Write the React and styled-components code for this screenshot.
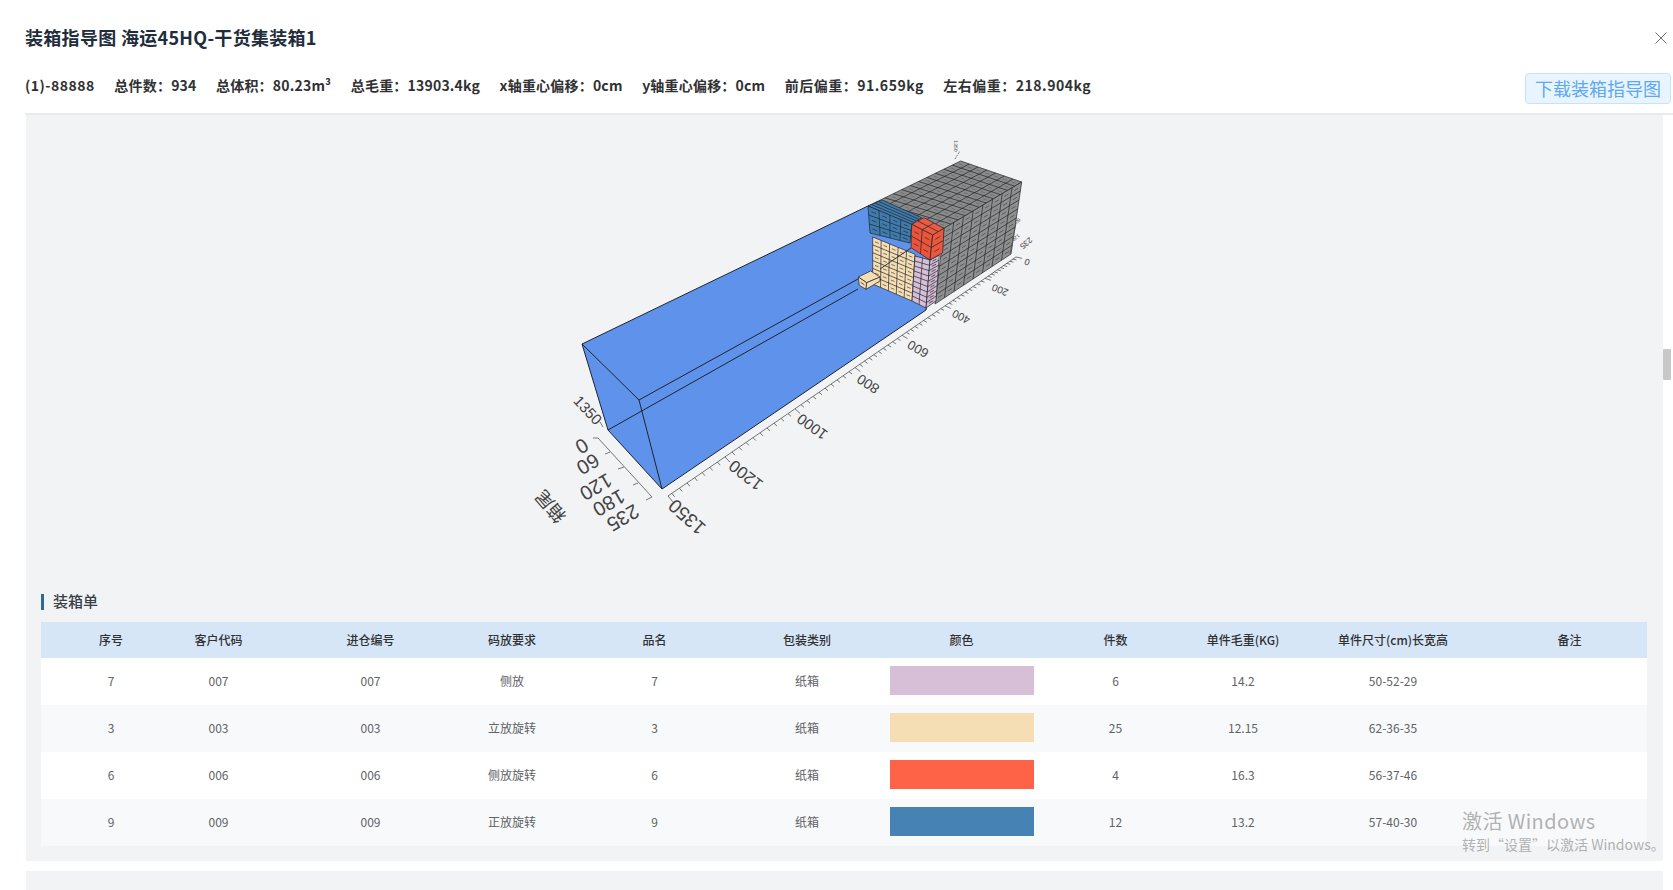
import styled, { createGlobalStyle } from "styled-components"

const INFO = [
    "(1)-88888",
    "总件数：934",
    "总体积：80.23m³",
    "总毛重：13903.4kg",
    "x轴重心偏移：0cm",
    "y轴重心偏移：0cm",
    "前后偏重：91.659kg",
    "左右偏重：218.904kg",
]

// width + how far the text sits off the middle of its column
const COLUMNS = [
    { title: "序号", key: "no", width: 124, shift: 8 },
    { title: "客户代码", key: "code", width: 129, shift: -11 },
    { title: "进仓编号", key: "code", width: 147, shift: 3 },
    { title: "码放要求", key: "rule", width: 142, shift: 0 },
    { title: "品名", key: "no", width: 147, shift: -2 },
    { title: "包装类别", key: "pack", width: 154, shift: 0 },
    { title: "颜色", key: "color", width: 155, shift: 0 },
    { title: "件数", key: "count", width: 141, shift: 6 },
    { title: "单件毛重(KG)", key: "weight", width: 138, shift: -6 },
    { title: "单件尺寸(cm)长宽高", key: "size", width: 164, shift: -7 },
    { title: "备注", key: "note", width: 165, shift: 5 },
]

const ROWS = [
    { no: "7", code: "007", rule: "侧放", pack: "纸箱", color: "#d8bfd8", count: "6", weight: "14.2", size: "50-52-29", note: "" },
    { no: "3", code: "003", rule: "立放旋转", pack: "纸箱", color: "#f5deb3", count: "25", weight: "12.15", size: "62-36-35", note: "" },
    { no: "6", code: "006", rule: "侧放旋转", pack: "纸箱", color: "#ff6347", count: "4", weight: "16.3", size: "56-37-46", note: "" },
    { no: "9", code: "009", rule: "正放旋转", pack: "纸箱", color: "#4682b4", count: "12", weight: "13.2", size: "57-40-30", note: "" },
]

const TEMPLATE = COLUMNS.map((c) => c.width + "px").join(" ")

const mix = (a, b, t) => [a[0] + (b[0] - a[0]) * t, a[1] + (b[1] - a[1]) * t]
const toPoints = (pts) => pts.map((p) => p.join(",")).join(" ")

// one side of a stack of boxes: a quad a-b-c-d cut into a grid
function Face({ pts, cols, rows, fill, mark }) {
    const [a, b, c, d] = pts
    const lines = []
    for (let i = 0; i <= cols; i++) {
        lines.push([mix(a, b, i / cols), mix(d, c, i / cols)])
    }
    for (let j = 0; j <= rows; j++) {
        lines.push([mix(a, d, j / rows), mix(b, c, j / rows)])
    }
    const marks = []
    if (mark) {
        for (let i = 0; i < cols; i++) {
            for (let j = 0; j < rows; j++) {
                const top = mix(mix(a, b, (i + 0.5) / cols), mix(d, c, (i + 0.5) / cols), (j + 0.5) / rows)
                const dir = mix([0, 0], [b[0] - a[0], b[1] - a[1]], 0.22 / cols)
                marks.push([[top[0] - dir[0], top[1] - dir[1]], [top[0] + dir[0], top[1] + dir[1]]])
            }
        }
    }
    return (
        <g>
            <polygon points={toPoints(pts)} fill={fill} />
            {marks.map((m, i) => (
                <line key={"m" + i} x1={m[0][0]} y1={m[0][1]} x2={m[1][0]} y2={m[1][1]} stroke={mark} strokeWidth="0.9" />
            ))}
            {lines.map((l, i) => (
                <line key={i} x1={l[0][0]} y1={l[0][1]} x2={l[1][0]} y2={l[1][1]} stroke="#20242c" strokeWidth="0.7" />
            ))}
        </g>
    )
}

const AXIS_STOPS = [
    [0, 1016], [200, 985], [400, 945], [600, 902], [800, 855], [1000, 795], [1200, 725], [1350, 668],
]

function axisPoint(v) {
    let i = 0
    while (i < AXIS_STOPS.length - 2 && v > AXIS_STOPS[i + 1][0]) i++
    const [v0, x0] = AXIS_STOPS[i]
    const [v1, x1] = AXIS_STOPS[i + 1]
    const x = x0 + ((v - v0) / (v1 - v0)) * (x1 - x0)
    const y = 495 + ((x - 668) / (1016 - 668)) * (256 - 495)
    return [x, y]
}

function XAxis() {
    const ticks = []
    for (let v = 0; v <= 1350; v += v >= 1340 ? 10 : 20) ticks.push(v)
    const [sx, sy] = axisPoint(0)
    const [ex, ey] = axisPoint(1350)
    return (
        <g stroke="#555" strokeWidth="0.8">
            <line x1={sx} y1={sy} x2={ex} y2={ey} />
            {ticks.map((v) => {
                const [x, y] = axisPoint(v)
                const big = v % 200 === 0 || v === 1350 ? 1.7 : 1
                const t = v / 1350
                const dx = (3.6 - t * 0.8) * big
                const dy = (0.8 + t * 2.6) * big
                return <line key={v} x1={x} y1={y} x2={x + dx} y2={y + dy} />
            })}
        </g>
    )
}

const AXIS_LABELS = [
    { text: "1350", x: 687, y: 516, size: 19, rot: 222 },
    { text: "1200", x: 746, y: 474, size: 17, rot: 218 },
    { text: "1000", x: 812, y: 426, size: 15, rot: 216 },
    { text: "800", x: 868, y: 383, size: 14, rot: 213 },
    { text: "600", x: 918, y: 348, size: 13, rot: 210 },
    { text: "400", x: 961, y: 316, size: 11, rot: 206 },
    { text: "200", x: 1000, y: 289, size: 10, rot: 202 },
    { text: "0", x: 1027, y: 261, size: 9, rot: 200 },
    { text: "0", x: 582, y: 445, size: 20, rot: 150 },
    { text: "60", x: 588, y: 463, size: 20, rot: 150 },
    { text: "120", x: 596, y: 486, size: 20, rot: 150 },
    { text: "180", x: 609, y: 502, size: 20, rot: 150 },
    { text: "235", x: 623, y: 517, size: 20, rot: 150 },
    { text: "1350", x: 588, y: 409, size: 15, rot: 47 },
    { text: "235", x: 1026, y: 242, size: 8, rot: 140 },
    { text: "120", x: 1016, y: 237, size: 5, rot: 140 },
    { text: "60", x: 1018, y: 220, size: 5, rot: 140 },
    { text: "1350", x: 956, y: 145, size: 5, rot: 92 },
]

const ZTICKS = [[598, 437, 593, 437], [610, 451, 605, 453], [624, 466, 618, 468], [638, 482, 633, 484], [652, 496, 646, 499]]

function LoadChart() {
    return (
        <ChartSvg viewBox="26 114 1637 463">
            <polygon points="582,343 868,205 940,240 926,309 662,488 608,429" fill="#5f92ea" stroke="#20242c" strokeWidth="1" />
            <g stroke="#20242c" strokeWidth="1" fill="none">
                <polyline points="582,343 639,399 662,488" />
                <line x1="639" y1="399" x2="858" y2="278" />
                <line x1="608" y1="429" x2="858" y2="288" />
            </g>

            <Face pts={[[960.7, 160], [1021.7, 181], [944, 227.3], [868, 205]]} cols={7} rows={11} fill="#8a8a8a" mark="#6c6c6c" />
            <Face pts={[[944, 227.3], [1021.7, 181], [1011, 253], [935, 303]]} cols={8} rows={8} fill="#8f8f8f" mark="#555" />

            <Face pts={[[872.7, 236], [915, 253.3], [912, 300], [872.7, 283]]} cols={5} rows={6} fill="#f5deb3" mark="#6f6349" />
            <Face pts={[[858.3, 276], [870.7, 270], [880, 276], [866.7, 281.7]]} cols={1} rows={1} fill="#f5deb3" />
            <Face pts={[[858.3, 276], [866.7, 281.7], [866, 288.3], [859.3, 284.3]]} cols={1} rows={1} fill="#f3dcb0" mark="#4f4635" />
            <polygon points="866.7,281.7 880,276 880,280 866,288.3" fill="#f5deb3" stroke="#20242c" strokeWidth="0.7" />
            <line x1="880" y1="268" x2="911" y2="247" stroke="#20242c" strokeWidth="0.9" />

            <Face pts={[[915, 255], [930, 259], [926, 307], [912, 300]]} cols={2} rows={9} fill="#d8bfd8" />
            <Face pts={[[930, 259], [939.3, 254], [936, 300], [926, 307]]} cols={1} rows={9} fill="#d2b9d2" mark="#4a404a" />

            <Face pts={[[868, 205], [882, 199], [921.7, 216.7], [911.7, 223.3]]} cols={4} rows={1} fill="#3f7bad" />
            <Face pts={[[868, 205], [911.7, 223.3], [910, 242], [870, 232]]} cols={4} rows={3} fill="#3f7bad" mark="#1f3f5c" />

            <Face pts={[[911.7, 223.3], [924, 216.7], [944, 227.3], [932.7, 234]]} cols={2} rows={2} fill="#ee5a3f" />
            <Face pts={[[911.7, 223.3], [932.7, 234], [930, 259], [911, 246.7]]} cols={2} rows={2} fill="#e9543a" mark="#7a2a1c" />
            <Face pts={[[932.7, 234], [944, 227.3], [942.7, 251.7], [930, 259]]} cols={1} rows={2} fill="#ea573d" mark="#7a2a1c" />

            <XAxis />
            <g stroke="#555" strokeWidth="0.8" fill="none">
                <line x1="598" y1="437" x2="652" y2="496" />
                {ZTICKS.map((t, i) => (
                    <line key={i} x1={t[0]} y1={t[1]} x2={t[2]} y2={t[3]} />
                ))}
                <line x1="600" y1="421" x2="603" y2="426" />
                <line x1="1010" y1="253" x2="1016" y2="222" />
                <line x1="955" y1="158" x2="960" y2="150" strokeDasharray="2 1" />
            </g>

            {AXIS_LABELS.map((l, i) => (
                <AxisLabel key={i} fontSize={l.size} transform={`translate(${l.x} ${l.y}) rotate(${l.rot})`}>
                    {l.text}
                </AxisLabel>
            ))}
            <AxisLabel fontSize="18" transform="translate(551 505) rotate(-130)">箱尾</AxisLabel>
        </ChartSvg>
    )
}

export default function App() {
    return (
        <Page>
            <GlobalStyle />
            <TitleRow>
                <Title>装箱指导图 海运45HQ-干货集装箱1</Title>
                <CloseIcon viewBox="0 0 12 12">
                    <path d="M0.5 0.5 L11.5 11.5 M11.5 0.5 L0.5 11.5" />
                </CloseIcon>
            </TitleRow>

            <InfoRow>
                <InfoList>
                    {INFO.map((item) => (
                        <li key={item}>{item}</li>
                    ))}
                </InfoList>
                <DownloadButton>下载装箱指导图</DownloadButton>
            </InfoRow>

            <Panel>
                <LoadChart />
                <SectionTitle>装箱单</SectionTitle>
                <Table>
                    <HeaderRow>
                        {COLUMNS.map((c) => (
                            <Cell key={c.title} $shift={c.shift}>{c.title}</Cell>
                        ))}
                    </HeaderRow>
                    {ROWS.map((row) => (
                        <BodyRow key={row.no}>
                            {COLUMNS.map((c) => (
                                <Cell key={c.title} $shift={c.shift}>
                                    {c.key === "color" ? <Swatch $color={row.color} /> : row[c.key]}
                                </Cell>
                            ))}
                        </BodyRow>
                    ))}
                </Table>
            </Panel>
            <NextPanel />

            <ScrollThumb />
            <Watermark>
                <strong>激活 Windows</strong>
                <span>转到“设置”以激活 Windows。</span>
            </Watermark>
        </Page>
    )
}

const GlobalStyle = createGlobalStyle`
    html, body {
        margin: 0;
        padding: 0;
        background: #fff;
        overflow: hidden;
    }
    * {
        box-sizing: border-box;
    }
`

const Page = styled.div`
    position: relative;
    width: 1673px;
    height: 890px;
    overflow: hidden;
    background: #fff;
    font-family: "Noto Sans CJK SC", "Noto Sans", sans-serif;
    color: #303133;
`

const TitleRow = styled.header`
    height: 73px;
    padding: 0 6px 0 25px;
    display: flex;
    justify-content: space-between;
    align-items: center;
`

const Title = styled.h2`
    margin: 0;
    font-size: 18px;
    font-weight: 700;
    letter-spacing: 0.3px;
    color: #1f2d3d;
`

const CloseIcon = styled.svg`
    width: 12px;
    height: 12px;
    margin-top: 3px;
    fill: none;
    stroke: #6f6f6f;
    stroke-width: 1;
`

const InfoRow = styled.section`
    margin-left: 25px;
    padding: 0 2px 9px 0;
    display: flex;
    justify-content: space-between;
    align-items: flex-start;
    border-bottom: 2px solid #e8eaec;
`

const InfoList = styled.ul`
    margin: 2px 0 0;
    padding: 0;
    list-style: none;
    display: flex;
    gap: 19.5px;
    font-size: 14px;
    line-height: 20px;
    font-weight: 700;
    letter-spacing: 0.2px;
    color: #303133;

    li:first-child,
    li:nth-child(n + 7) {
        letter-spacing: 0.5px;
    }
`

const DownloadButton = styled.button`
    width: 146px;
    height: 31px;
    padding: 0 0 2px;
    font-family: inherit;
    font-size: 18px;
    color: #5ea9ee;
    background: #e8f4ff;
    border: 1px solid #c6e2ff;
    border-radius: 4px;
`

const Panel = styled.main`
    width: 1637px;
    height: 746px;
    margin-left: 26px;
    padding: 0 14px 0 15px;
    background: #f2f3f5;
`

const NextPanel = styled.div`
    width: 1637px;
    height: 20px;
    margin: 10px 0 0 26px;
    background: #f2f3f5;
`

const ChartSvg = styled.svg`
    display: block;
    width: 1637px;
    height: 463px;
    margin-left: -15px;
`

const AxisLabel = styled.text`
    font-family: "Liberation Sans", "Noto Sans CJK SC", sans-serif;
    fill: #444;
    text-anchor: middle;
    dominant-baseline: central;
`

const SectionTitle = styled.h3`
    margin: 16px 0 12px;
    padding-left: 9px;
    height: 16px;
    line-height: 14px;
    font-size: 15px;
    font-weight: 500;
    color: #3a3f47;
    border-left: 3px solid #2b6a99;
`

const Table = styled.div`
    width: 1606px;
    font-size: 12px;
    color: #606266;
`

const HeaderRow = styled.div`
    display: grid;
    grid-template-columns: ${TEMPLATE};
    height: 36px;
    align-items: center;
    background: #d6e6f7;
    color: #303133;
    font-weight: 500;
`

const BodyRow = styled.div`
    display: grid;
    grid-template-columns: ${TEMPLATE};
    height: 47px;
    align-items: center;
    background: #fff;

    &:nth-child(odd) {
        background: #f8f9fa;
    }
`

const Cell = styled.div`
    display: flex;
    justify-content: center;
    padding-left: ${(p) => (p.$shift > 0 ? p.$shift * 2 : 0)}px;
    padding-right: ${(p) => (p.$shift < 0 ? -p.$shift * 2 : 0)}px;
    padding-bottom: 2px;
    white-space: nowrap;
`

const Swatch = styled.div`
    width: 144px;
    height: 29px;
    background: ${(p) => p.$color};
`

const ScrollThumb = styled.div`
    position: absolute;
    top: 349px;
    left: 1663px;
    width: 8px;
    height: 31px;
    border-radius: 1px;
    background: #c8c8c8;
`

const Watermark = styled.aside`
    position: absolute;
    top: 808px;
    left: 1462px;
    display: flex;
    flex-direction: column;
    color: rgba(130, 130, 130, 0.62);
    white-space: nowrap;

    strong {
        font-size: 20px;
        line-height: 26px;
        font-weight: 400;
        letter-spacing: 0.4px;
    }

    span {
        font-size: 14px;
        line-height: 20px;
    }
`
